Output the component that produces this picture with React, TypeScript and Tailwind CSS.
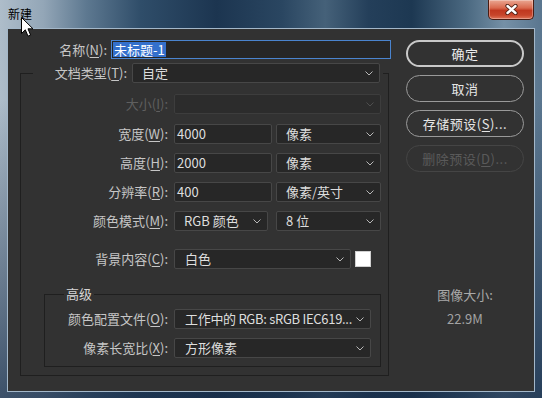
import type { ReactNode } from 'react';

const font = "font-['Noto_Sans_CJK_SC','Microsoft_YaHei',sans-serif]";

function Chevron({ dim }: { dim?: boolean }) {
  return (
    <svg width="8" height="5" viewBox="0 0 8 5" className="shrink-0">
      <path
        d="M0.5 0.5 L4 4 L7.5 0.5"
        fill="none"
        stroke={dim ? '#4e4e4e' : '#b8b8b8'}
        strokeWidth="1"
      />
    </svg>
  );
}

function Select({
  value,
  className,
  disabled,
  textClass = '',
}: {
  value?: string;
  className: string;
  disabled?: boolean;
  textClass?: string;
}) {
  return (
    <div
      className={`flex h-[20px] shrink-0 items-center justify-between rounded-[2px] border pl-[9px] pr-[6px] text-[13px] leading-[18px] ${
        disabled
          ? 'border-[#3d3d3d] bg-[#2c2c2c]'
          : 'border-[#474747] bg-[#272727] text-[#dedede]'
      } ${className}`}
    >
      <span className={`overflow-hidden whitespace-nowrap ${textClass}`}>{value}</span>
      <Chevron dim={disabled} />
    </div>
  );
}

function Input({ value, className }: { value: string; className: string }) {
  return (
    <div
      className={`flex h-[20px] shrink-0 items-center rounded-[2px] border border-[#474747] bg-[#272727] pl-[2px] text-[13px] leading-[18px] text-[#dedede] ${className}`}
    >
      {value}
    </div>
  );
}

function Row({
  label,
  labelWidth,
  disabled,
  className = '',
  children,
}: {
  label: ReactNode;
  labelWidth: string;
  disabled?: boolean;
  className?: string;
  children: ReactNode;
}) {
  return (
    <div className={`flex h-[20px] items-center ${className}`}>
      <div
        className={`${labelWidth} shrink-0 whitespace-nowrap text-right text-[13px] leading-[20px] ${
          disabled ? 'text-[#5f5f5f]' : 'text-[#c6c6c6]'
        }`}
      >
        {label}
      </div>
      <div className="ml-[6px] flex items-center">{children}</div>
    </div>
  );
}

function Btn({
  children,
  primary,
  disabled,
}: {
  children: ReactNode;
  primary?: boolean;
  disabled?: boolean;
}) {
  return (
    <div
      className={`flex h-[27px] items-center justify-center rounded-full text-[13px] tracking-[0.5px] ${
        primary
          ? 'border-2 border-[#c9c9c9] text-[#ececec]'
          : disabled
            ? 'border border-[#454545] text-[#5a5a5a]'
            : 'border border-[#9a9a9a] text-[#e6e6e6]'
      }`}
    >
      {children}
    </div>
  );
}

export default function App() {
  return (
    <div
      className={`${font} relative flex h-[398px] w-[542px] flex-col overflow-hidden bg-[linear-gradient(180deg,rgba(0,0,0,0)_0%,rgba(0,0,0,0)_25%,rgba(22,44,72,0.75)_100%),linear-gradient(90deg,#aebdca_0%,#93a6b7_8%,#5d7890_16%,#2f4d69_26%,#1c3550_40%,#2a4661_52%,#456179_60%,#243f5a_68%,#1d3852_76%,#4a6880_86%,#7590a6_93%,#5a768f_100%)] px-[7px] pb-[6px]`}
    >
      {/* title bar */}
      <div className="flex h-[28px] shrink-0 items-start justify-between">
        <div className="pl-[1px] pt-[7px] text-[12px] leading-[14px] text-black">新建</div>
        <div className="mr-[1px] flex h-[20px] w-[46px] items-center justify-center rounded-b-[5px] border border-t-0 border-[#4a1c12] bg-[linear-gradient(180deg,#eaa792_0%,#d9684d_42%,#c13820_55%,#c7452b_80%,#df7458_100%)] shadow-[inset_0_0_0_1px_rgba(255,255,255,0.3)]">
          <svg width="13" height="11" viewBox="0 0 13 11">
            <path d="M2.5 2 L10.5 9 M10.5 2 L2.5 9" stroke="#4a1d12" strokeWidth="4.2" strokeLinecap="round" />
            <path d="M2.5 2 L10.5 9 M10.5 2 L2.5 9" stroke="#ffffff" strokeWidth="2.4" strokeLinecap="round" />
          </svg>
        </div>
      </div>

      {/* client area */}
      <div className="flex flex-1 border border-[#a3b7c9] bg-[#323232]">
        {/* left column */}
        <div className="w-[383px] shrink-0">
          <div className="mt-[11px] flex items-center">
            <div className="w-[99px] shrink-0 text-right text-[13px] leading-[19px] text-[#c6c6c6]">
              名称(<u className="underline-offset-2">N</u>):
            </div>
            <div className="ml-[4px] flex h-[19px] w-[281px] items-center border border-[#4a84cf] bg-[#262626] pl-[1px] text-[13px]">
              <span className="bg-[#3470cc] px-[1px] leading-[15px] text-white">未标题-1</span>
            </div>
          </div>

          <fieldset className="ml-[12px] mt-[4px] w-[369px] border border-[#1f1f1f]">
            <legend className="ml-[12px]">
              <div className="flex items-center pr-[3px]">
                <div className="w-[94px] shrink-0 text-right text-[13px] leading-[20px] text-[#c6c6c6]">
                  文档类型(<u className="underline-offset-2">T</u>):
                </div>
                <Select value="自定" className="ml-[5px] w-[248px]" />
              </div>
            </legend>

            <div className="pt-[11px]">
              <Row label={<>大小(<u className="underline-offset-2">I</u>):</>} labelWidth="w-[147px]" disabled>
                <Select className="w-[207px]" disabled />
              </Row>
              <Row label={<>宽度(<u className="underline-offset-2">W</u>):</>} labelWidth="w-[147px]" className="mt-[10px]">
                <Input value="4000" className="w-[98px]" />
                <Select value="像素" className="ml-[4px] w-[105px]" />
              </Row>
              <Row label={<>高度(<u className="underline-offset-2">H</u>):</>} labelWidth="w-[147px]" className="mt-[9px]">
                <Input value="2000" className="w-[98px]" />
                <Select value="像素" className="ml-[4px] w-[105px]" />
              </Row>
              <Row label={<>分辨率(<u className="underline-offset-2">R</u>):</>} labelWidth="w-[147px]" className="mt-[9px]">
                <Input value="400" className="w-[98px]" />
                <Select value="像素/英寸" className="ml-[4px] w-[105px]" />
              </Row>
              <Row label={<>颜色模式(<u className="underline-offset-2">M</u>):</>} labelWidth="w-[147px]" className="mt-[9px]">
                <Select value="RGB 颜色" className="w-[94px]" />
                <Select value="8 位" className="ml-[8px] w-[105px]" />
              </Row>
              <Row label={<>背景内容(<u className="underline-offset-2">C</u>):</>} labelWidth="w-[147px]" className="mt-[18px]">
                <Select value="白色" className="w-[177px] pl-[10px]" />
                <div className="ml-[4px] h-[16px] w-[16px] border border-[#d0d0d0] bg-white" />
              </Row>

              <fieldset className="mb-[8px] ml-[23px] mt-[17px] w-[337px] border border-[#1f1f1f]">
                <legend className="ml-[19px] px-[2px] text-[13px] leading-[16px] text-[#d6d6d6]">高级</legend>
                <div className="pb-[8px] pt-[7px]">
                  <Row label={<>颜色配置文件(<u className="underline-offset-2">O</u>):</>} labelWidth="w-[123px]">
                    <Select
                      value="工作中的 RGB: sRGB IEC619..."
                      className="w-[197px] pl-[10px] pr-[5px]"
                      textClass="tracking-[-0.3px]"
                    />
                  </Row>
                  <Row label={<>像素长宽比(<u className="underline-offset-2">X</u>):</>} labelWidth="w-[123px]" className="mt-[9px]">
                    <Select value="方形像素" className="w-[197px] pl-[10px]" />
                  </Row>
                </div>
              </fieldset>
            </div>
          </fieldset>
        </div>

        {/* right column */}
        <div className="ml-[15px] flex w-[118px] shrink-0 flex-col pt-[11px]">
          <div className="flex flex-col gap-[8px]">
            <Btn primary>确定</Btn>
            <Btn>取消</Btn>
            <Btn>
              存储预设(<u className="underline-offset-2">S</u>)...
            </Btn>
            <Btn disabled>
              删除预设(<u className="underline-offset-2">D</u>)...
            </Btn>
          </div>
          <div className="mt-[114px] text-center text-[13px] leading-[18px] text-[#a9a9a9]">图像大小:</div>
          <div className="mt-[6px] text-center text-[13px] leading-[18px] text-[#a3a3a3]">22.9M</div>
        </div>
      </div>

      {/* mouse cursor */}
      <svg
        className="pointer-events-none absolute left-[21px] top-[17px]"
        width="13"
        height="21"
        viewBox="0 0 13 21"
      >
        <path
          d="M0.5 0.5 L0.5 16.5 L4.3 12.8 L7 19.2 L9.6 18.1 L7 11.8 L12 11.8 Z"
          fill="#ffffff"
          stroke="#000000"
          strokeWidth="1"
          strokeLinejoin="round"
        />
      </svg>
    </div>
  );
}
